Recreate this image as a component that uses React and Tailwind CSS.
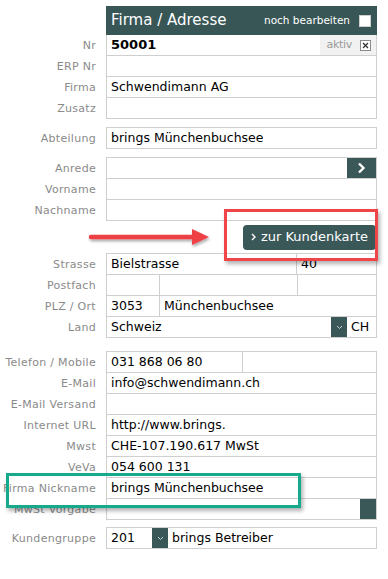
const font = { fontFamily: '"DejaVu Sans", Verdana, sans-serif' };

function Row({ label, first, children, labelClass = "" }) {
  return (
    <div className="flex items-center">
      <div className={`w-[96px] shrink-0 text-right text-[11px] tracking-[0.3px] text-[#8a8a8a] leading-none ${labelClass}`}>
        {label}
      </div>
      <div
        className={`ml-[10px] w-[271px] flex items-stretch border-x border-b border-[#cfcfcf] ${
          first ? "border-t h-[22px]" : "h-[21px]"
        }`}
      >
        {children}
      </div>
    </div>
  );
}

function Val({ children, className = "" }) {
  return (
    <div className={`flex items-center pl-[4px] text-[12.5px] text-black whitespace-nowrap overflow-hidden ${className}`}>
      {children}
    </div>
  );
}

function Drop({ className = "" }) {
  return (
    <div className={`bg-[#3a5858] flex items-center justify-center ${className}`}>
      <svg width="7" height="5" viewBox="0 0 7 5">
        <polyline points="1,1 3.5,3.5 6,1" fill="none" stroke="#c9d2d2" strokeWidth="1" />
      </svg>
    </div>
  );
}

export default function App() {
  return (
    <div className="relative w-[388px] h-[579px] bg-white overflow-hidden" style={font}>
      <div className="pt-[6px]">
        {/* header */}
        <div className="ml-[106px] w-[271px] h-[29px] bg-[#385656] flex items-center pl-[5px] pr-[6px]">
          <span className="text-[15px] text-white">Firma / Adresse</span>
          <span className="ml-auto text-[10.5px] text-white">noch bearbeiten</span>
          <span className="ml-[9px] w-[12px] h-[12px] bg-white border border-[#d0d0d0]" />
        </div>

        <Row label="Nr">
          <Val className="font-bold text-[13px] flex-1">50001</Val>
          <div className="w-[56px] bg-[#f1f1f1] flex items-center justify-end pr-[5px] gap-[8px]">
            <span className="text-[11px] text-[#9a9a9a] tracking-[-0.3px]">aktiv</span>
            <span className="w-[11px] h-[11px] border border-[#8a8a8a] bg-white flex items-center justify-center">
              <svg width="7" height="7" viewBox="0 0 7 7">
                <path d="M1 1L6 6M6 1L1 6" stroke="#333" strokeWidth="1.3" />
              </svg>
            </span>
          </div>
        </Row>
        <Row label="ERP Nr" />
        <Row label="Firma">
          <Val>Schwendimann AG</Val>
        </Row>
        <Row label="Zusatz" />

        <div className="mt-[8px]">
          <Row label="Abteilung" first>
            <Val>brings Münchenbuchsee</Val>
          </Row>
        </div>

        <div className="mt-[8px]">
          <Row label="Anrede" first>
            <div className="flex-1" />
            <div className="w-[29px] bg-[#3a5858] flex items-center justify-center">
              <svg width="9" height="12" viewBox="0 0 9 12">
                <polyline points="2,1.5 6.5,6 2,10.5" fill="none" stroke="white" strokeWidth="2.4" />
              </svg>
            </div>
          </Row>
          <Row label="Vorname" />
          <Row label="Nachname" />
        </div>

        <div className="h-[32px] flex items-center justify-end w-[376px]">
          <div className="h-[25px] px-[8px] rounded-[4px] bg-[#3a5858] flex items-center gap-[5px] text-white text-[13px]">
            <svg width="5" height="8" viewBox="0 0 5 8">
              <polyline points="1,1 4,4 1,7" fill="none" stroke="white" strokeWidth="1.4" />
            </svg>
            zur Kundenkarte
          </div>
        </div>

        <Row label="Strasse" first>
          <Val className="w-[189px]">Bielstrasse</Val>
          <Val className="flex-1 border-l border-[#cfcfcf]">40</Val>
        </Row>
        <Row label="Postfach">
          <div className="w-[52px]" />
          <div className="w-[138px] border-l border-[#cfcfcf]" />
          <div className="flex-1 border-l border-[#cfcfcf]" />
        </Row>
        <Row label="PLZ / Ort">
          <Val className="w-[52px]">3053</Val>
          <Val className="flex-1 border-l border-[#cfcfcf]">Münchenbuchsee</Val>
        </Row>
        <Row label="Land">
          <Val className="flex-1">Schweiz</Val>
          <Drop className="w-[16px]" />
          <Val className="w-[29px] pl-[3px]">CH</Val>
        </Row>

        <div className="mt-[13px]">
          <Row label="Telefon / Mobile" first>
            <Val className="w-[135px]">031 868 06 80</Val>
            <div className="flex-1 border-l border-[#cfcfcf]" />
          </Row>
          <Row label="E-Mail">
            <Val>info@schwendimann.ch</Val>
          </Row>
          <Row label="E-Mail Versand" />
          <Row label="Internet URL">
            <Val>http://www.brings.</Val>
          </Row>
          <Row label="Mwst">
            <Val>CHE-107.190.617 MwSt</Val>
          </Row>
          <Row label="VeVa">
            <Val>054 600 131</Val>
          </Row>
          <Row label="Firma Nickname">
            <Val>brings Münchenbuchsee</Val>
          </Row>
          <Row label="MwSt Vorgabe">
            <div className="flex-1" />
            <div className="w-[16px] bg-[#3a5858]" />
          </Row>
        </div>

        <div className="mt-[7px]">
          <Row label="Kundengruppe" first>
            <Val className="w-[45px]">201</Val>
            <Drop className="w-[16px]" />
            <Val className="flex-1 pl-[3px]">brings Betreiber</Val>
          </Row>
        </div>
      </div>

      {/* annotations */}
      <svg className="absolute left-[86px] top-[227px]" width="126" height="22" viewBox="0 0 126 22">
        <defs>
          <filter id="sh" x="-10%" y="-50%" width="120%" height="200%">
            <feDropShadow dx="1" dy="2" stdDeviation="1.5" floodColor="#000" floodOpacity="0.35" />
          </filter>
        </defs>
        <g filter="url(#sh)">
          <line x1="5" y1="10" x2="108" y2="10" stroke="#ef3f45" strokeWidth="4.5" strokeLinecap="round" />
          <polygon points="106,2 123,10 106,18" fill="#ef3f45" />
        </g>
      </svg>
      <div className="absolute left-[224px] top-[209px] w-[154px] h-[52px] border-[3px] border-[#ef4549] shadow-[2px_3px_4px_rgba(0,0,0,0.3)]" />
      <div className="absolute left-[6px] top-[473px] w-[295px] h-[35px] border-[3px] border-[#17a98c] shadow-[2px_3px_4px_rgba(0,0,0,0.3)]" />
    </div>
  );
}
